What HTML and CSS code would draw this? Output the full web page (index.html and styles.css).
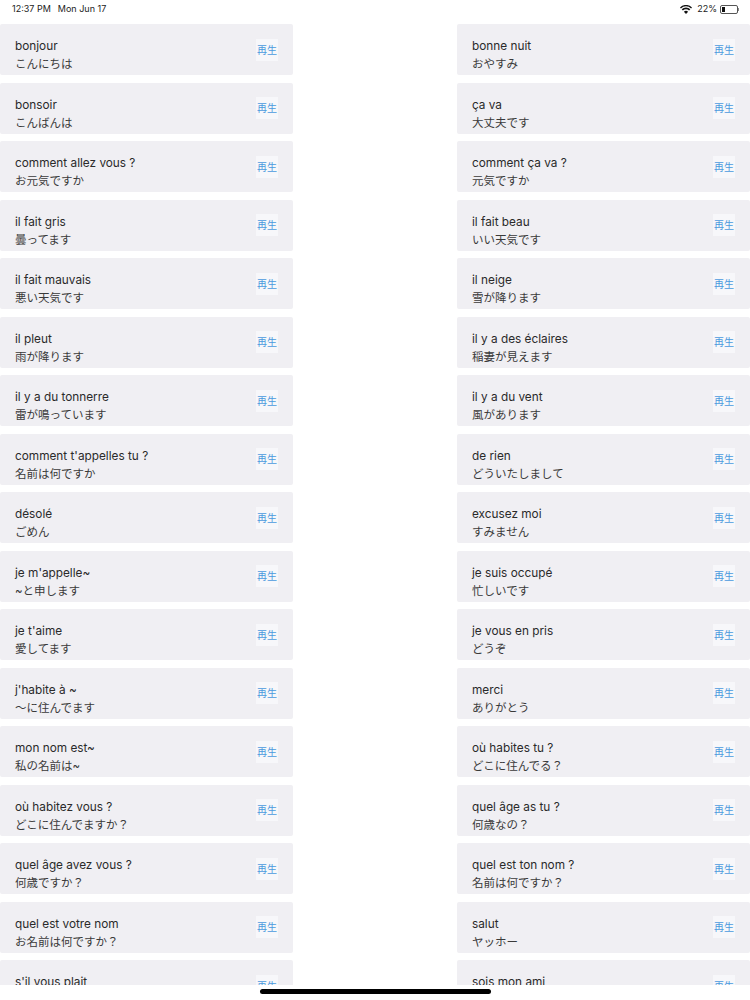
FILE: index.html
```html
<!DOCTYPE html>
<html lang="ja">
	<head>
		<link rel="stylesheet" href="styles.css">
		<meta charset="utf-8">
	</head>

	<body>
		<div class="statusbar">
			<div class="clock"><span>12:37 PM</span><span>Mon Jun 17</span></div>
			<div class="sysicons">
				<svg class="wifi" width="12" height="9" viewBox="0 0 12 9">
					<path d="M6 9 L3.9 6.7 A3 3 0 0 1 8.1 6.7 Z" fill="#111"/>
					<path d="M2.9 5.6 L1.7 4.3 A6 6 0 0 1 10.3 4.3 L9.1 5.6 A4.4 4.4 0 0 0 2.9 5.6 Z" fill="#111"/>
					<path d="M0.9 3.4 L0 2.4 A8.5 8.5 0 0 1 12 2.4 L11.1 3.4 A7.2 7.2 0 0 0 0.9 3.4 Z" fill="#111"/>
				</svg>
				<span>22%</span>
				<div class="battery"><div class="level"></div></div>
				<div class="nub"></div>
			</div>
		</div>

		<div class="list">
			<div class="card"><div class="words"><p class="fr">bonjour</p><p class="ja">こんにちは</p></div><div class="play">再生</div></div>
			<div class="card"><div class="words"><p class="fr">bonne nuit</p><p class="ja">おやすみ</p></div><div class="play">再生</div></div>

			<div class="card"><div class="words"><p class="fr">bonsoir</p><p class="ja">こんばんは</p></div><div class="play">再生</div></div>
			<div class="card"><div class="words"><p class="fr">ça va</p><p class="ja">大丈夫です</p></div><div class="play">再生</div></div>

			<div class="card"><div class="words"><p class="fr">comment allez vous ?</p><p class="ja">お元気ですか</p></div><div class="play">再生</div></div>
			<div class="card"><div class="words"><p class="fr">comment ça va ?</p><p class="ja">元気ですか</p></div><div class="play">再生</div></div>

			<div class="card"><div class="words"><p class="fr">il fait gris</p><p class="ja">曇ってます</p></div><div class="play">再生</div></div>
			<div class="card"><div class="words"><p class="fr">il fait beau</p><p class="ja">いい天気です</p></div><div class="play">再生</div></div>

			<div class="card"><div class="words"><p class="fr">il fait mauvais</p><p class="ja">悪い天気です</p></div><div class="play">再生</div></div>
			<div class="card"><div class="words"><p class="fr">il neige</p><p class="ja">雪が降ります</p></div><div class="play">再生</div></div>

			<div class="card"><div class="words"><p class="fr">il pleut</p><p class="ja">雨が降ります</p></div><div class="play">再生</div></div>
			<div class="card"><div class="words"><p class="fr">il y a des éclaires</p><p class="ja">稲妻が見えます</p></div><div class="play">再生</div></div>

			<div class="card"><div class="words"><p class="fr">il y a du tonnerre</p><p class="ja">雷が鳴っています</p></div><div class="play">再生</div></div>
			<div class="card"><div class="words"><p class="fr">il y a du vent</p><p class="ja">風があります</p></div><div class="play">再生</div></div>

			<div class="card"><div class="words"><p class="fr">comment t'appelles tu ?</p><p class="ja">名前は何ですか</p></div><div class="play">再生</div></div>
			<div class="card"><div class="words"><p class="fr">de rien</p><p class="ja">どういたしまして</p></div><div class="play">再生</div></div>

			<div class="card"><div class="words"><p class="fr">désolé</p><p class="ja">ごめん</p></div><div class="play">再生</div></div>
			<div class="card"><div class="words"><p class="fr">excusez moi</p><p class="ja">すみません</p></div><div class="play">再生</div></div>

			<div class="card"><div class="words"><p class="fr">je m'appelle~</p><p class="ja">~と申します</p></div><div class="play">再生</div></div>
			<div class="card"><div class="words"><p class="fr">je suis occupé</p><p class="ja">忙しいです</p></div><div class="play">再生</div></div>

			<div class="card"><div class="words"><p class="fr">je t'aime</p><p class="ja">愛してます</p></div><div class="play">再生</div></div>
			<div class="card"><div class="words"><p class="fr">je vous en pris</p><p class="ja">どうぞ</p></div><div class="play">再生</div></div>

			<div class="card"><div class="words"><p class="fr">j'habite à ~</p><p class="ja">〜に住んでます</p></div><div class="play">再生</div></div>
			<div class="card"><div class="words"><p class="fr">merci</p><p class="ja">ありがとう</p></div><div class="play">再生</div></div>

			<div class="card"><div class="words"><p class="fr">mon nom est~</p><p class="ja">私の名前は~</p></div><div class="play">再生</div></div>
			<div class="card"><div class="words"><p class="fr">où habites tu ?</p><p class="ja">どこに住んでる？</p></div><div class="play">再生</div></div>

			<div class="card"><div class="words"><p class="fr">où habitez vous ?</p><p class="ja">どこに住んでますか？</p></div><div class="play">再生</div></div>
			<div class="card"><div class="words"><p class="fr">quel âge as tu ?</p><p class="ja">何歳なの？</p></div><div class="play">再生</div></div>

			<div class="card"><div class="words"><p class="fr">quel âge avez vous ?</p><p class="ja">何歳ですか？</p></div><div class="play">再生</div></div>
			<div class="card"><div class="words"><p class="fr">quel est ton nom ?</p><p class="ja">名前は何ですか？</p></div><div class="play">再生</div></div>

			<div class="card"><div class="words"><p class="fr">quel est votre nom</p><p class="ja">お名前は何ですか？</p></div><div class="play">再生</div></div>
			<div class="card"><div class="words"><p class="fr">salut</p><p class="ja">ヤッホー</p></div><div class="play">再生</div></div>

			<div class="card"><div class="words"><p class="fr">s'il vous plait</p><p class="ja">お願いします</p></div><div class="play">再生</div></div>
			<div class="card"><div class="words"><p class="fr">sois mon ami</p><p class="ja">友達になって</p></div><div class="play">再生</div></div>
		</div>

		<div class="homearea"><div class="homebar"></div></div>
	</body>
</html>
```

FILE: styles.css
```css
html, body {
	margin: 0;
	height: 1000px;
	overflow: hidden;
	background-color: #fff;
}

body {
	display: flex;
	flex-direction: column;
	font-family: "Inter", "Noto Sans CJK JP", sans-serif;
	color: #222;
}

p {
	margin: 0;
}

.statusbar {
	height: 24px;
	flex: none;
	display: flex;
	justify-content: space-between;
	align-items: flex-start;
	padding: 3px 0 0 12px;
	box-sizing: border-box;
	font-size: 9px;
	line-height: 12px;
	color: #222;
}

.clock {
	display: flex;
	gap: 7px;
}

.sysicons {
	display: flex;
	align-items: center;
	height: 12px;
	padding-right: 11px;
}

.wifi {
	margin-right: 5px;
}

.battery {
	width: 14px;
	height: 5px;
	margin-left: 3px;
	border: 1px solid #555;
	border-radius: 2px;
	padding: 1px;
}

.level {
	width: 3px;
	height: 5px;
	background-color: #111;
}

.nub {
	width: 1px;
	height: 3px;
	background-color: #888;
}

.list {
	flex: none;
	height: 961px;
	overflow: hidden;
	display: grid;
	grid-template-columns: 293px 293px;
	justify-content: space-between;
	grid-auto-rows: 51px;
	row-gap: 7.5px;
}

.card {
	display: flex;
	justify-content: space-between;
	align-items: center;
	padding: 0 15px;
	background-color: #f0eff3;
	border-radius: 2px;
}

.words {
	padding-top: 12px;
}

.fr {
	font-size: 11.8px;
	line-height: 18px;
	color: #2a2a2a;
}

.ja {
	font-size: 11.5px;
	line-height: 18.5px;
	color: #3a3a3a;
}

.play {
	width: 22px;
	height: 22px;
	line-height: 22px;
	text-align: center;
	font-size: 10px;
	color: #4a9ade;
	background-color: #f7f7fa;
}

.homearea {
	flex: 1;
	display: flex;
	justify-content: center;
	padding-top: 4px;
}

.homebar {
	width: 231px;
	height: 5px;
	border-radius: 3px;
	background-color: #000;
}
```
